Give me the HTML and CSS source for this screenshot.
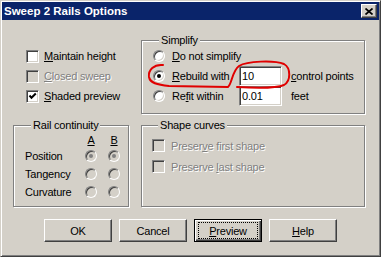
FILE: index.html
```html
<!DOCTYPE html>
<html lang="en">
<head>
  <meta charset="UTF-8" />
  <meta name="viewport" content="width=device-width, initial-scale=1.0" />
  <title>Sweep 2 Rails Options</title>
  <link rel="stylesheet" href="styles.css">
</head>
<body>
  <div class="window">
    <div class="titlebar">
      <span class="title">Sweep 2 Rails Options</span>
      <button class="close" aria-label="Close">
        <svg width="8" height="7" viewBox="0 0 8 7"><path d="M0.5 0.5 L7.5 6.5 M7.5 0.5 L0.5 6.5" stroke="#000" stroke-width="1.7" fill="none"/></svg>
      </button>
    </div>

    <div class="content">
      <div class="groups">
        <div class="options">
          <label class="check"><span class="box"></span><span><u>M</u>aintain height</span></label>
          <label class="check disabled"><span class="box"></span><span><u>C</u>losed sweep</span></label>
          <label class="check"><span class="box"><svg width="9" height="9" viewBox="0 0 9 9"><path d="M1.5 3.5 L3.5 5.8 L7.8 1.5" stroke="#000" stroke-width="2" fill="none"/></svg></span><span><u>S</u>haded preview</span></label>
        </div>

        <fieldset class="group simplify">
          <legend>Simplify</legend>
          <div class="simplify-grid">
            <label class="radio"><span class="dot"></span><span><u>D</u>o not simplify</span></label>
            <span></span><span></span>
            <label class="radio"><span class="dot on"></span><span><u>R</u>ebuild with</span></label>
            <input class="field" type="text" value="10">
            <span class="unit"><u>c</u>ontrol points</span>
            <label class="radio"><span class="dot"></span><span>Re<u>f</u>it within</span></label>
            <input class="field" type="text" value="0.01">
            <span class="unit">feet</span>
          </div>
        </fieldset>

        <fieldset class="group rail">
          <legend>Rail continuity</legend>
          <div class="rail-grid">
            <span></span><span class="col"><u>A</u></span><span class="col"><u>B</u></span>
            <span>Position</span><span class="dot off on"></span><span class="dot off on"></span>
            <span>Tangency</span><span class="dot off"></span><span class="dot off"></span>
            <span>Curvature</span><span class="dot off"></span><span class="dot off"></span>
          </div>
        </fieldset>

        <fieldset class="group shape">
          <legend>Shape curves</legend>
          <div class="shape-list">
            <label class="check disabled"><span class="box"></span><span>Preser<u>v</u>e first shape</span></label>
            <label class="check disabled"><span class="box"></span><span>Preserve <u>l</u>ast shape</span></label>
          </div>
        </fieldset>
      </div>

      <div class="buttons">
        <button class="btn"><span class="label">OK</span></button>
        <button class="btn"><span class="label">Cancel</span></button>
        <button class="btn default"><span class="label"><u>P</u>review</span></button>
        <button class="btn"><span class="label"><u>H</u>elp</span></button>
      </div>
    </div>

    <!-- hand-drawn red marker around the rebuild option -->
    <svg class="annotation" width="381" height="257" viewBox="0 0 381 257">
      <path d="M164 66 C155 65 149 71 150 78 C151 84 158 86 170 87 L229 88 C233 85 233 72 240 67 C248 62 275 61 285 65 C292 69 292 82 285 86 C278 89 255 89 238 88" stroke="#e00000" stroke-width="2" fill="none" stroke-linecap="round"/>
    </svg>
  </div>
</body>
</html>
```

FILE: styles.css
```css
body {
  margin: 0;
  font-family: 'Liberation Sans', Arial, sans-serif;
  font-size: 11px;
  letter-spacing: -0.2px;
  color: #000;
  background: #d4d0c8;
}
.window {
  position: relative;
  width: 381px;
  height: 257px;
  box-sizing: border-box;
  padding: 1px;
  background: #d4d0c8;
  border: 1px solid;
  border-color: #d4d0c8 #404040 #404040 #d4d0c8;
  box-shadow: inset 1px 1px 0 #fff, inset -1px -1px 0 #808080;
}
.titlebar {
  height: 18px;
  background: #0a246a;
  display: flex;
  align-items: center;
  justify-content: space-between;
  padding-left: 2px;
}
.title {
  color: #fff;
  font-weight: bold;
  font-size: 11.5px;
  letter-spacing: 0;
  line-height: 18px;
}
.close {
  width: 16px;
  height: 14px;
  margin-right: 2px;
  padding: 0;
  display: flex;
  align-items: center;
  justify-content: center;
  background: #d4d0c8;
  border: 1px solid;
  border-color: #fff #404040 #404040 #fff;
  box-shadow: inset -1px -1px 0 #808080;
}
.content {
  padding: 14px 0 0 11px;
}
.groups {
  display: grid;
  grid-template-columns: 116px 224px;
  column-gap: 12px;
  row-gap: 5px;
}
.options {
  padding: 12px 0 0 13px;
  display: flex;
  flex-direction: column;
}
.check {
  height: 20px;
  display: flex;
  align-items: center;
  gap: 5px;
  white-space: nowrap;
}
.box {
  width: 13px;
  height: 13px;
  box-sizing: border-box;
  flex: none;
  background: #fff;
  border: 1px solid;
  border-color: #808080 #fff #fff #808080;
  box-shadow: inset 1px 1px 0 #404040, inset -1px -1px 0 #d4d0c8;
  display: flex;
  align-items: center;
  justify-content: center;
}
.disabled {
  color: #808080;
  text-shadow: 1px 1px 0 #fff;
}
.disabled .box {
  background: #d4d0c8;
}
.group {
  margin: 0;
  padding: 0;
  min-width: 0;
  border: 1px solid #808080;
  box-shadow: 1px 1px 0 #fff, inset 1px 1px 0 #fff;
}
.group legend {
  margin-left: 6px;
  padding: 0 2px;
  line-height: 12px;
  background: #d4d0c8;
}
.simplify {
  padding: 0 0 7px 11px;
}
.simplify-grid {
  display: grid;
  grid-template-columns: 86px 43px auto;
  grid-auto-rows: 20px;
  align-items: center;
}
.radio {
  display: flex;
  align-items: center;
  gap: 7px;
  white-space: nowrap;
}
.dot {
  width: 12px;
  height: 12px;
  box-sizing: border-box;
  flex: none;
  border-radius: 50%;
  background: #fff;
  border: 1px solid;
  border-color: #808080 #fff #fff #808080;
  box-shadow: inset 1px 1px 0 #404040, inset -1px -1px 0 #d4d0c8;
  display: flex;
  align-items: center;
  justify-content: center;
}
.dot.on::after {
  content: "";
  width: 4px;
  height: 4px;
  border-radius: 50%;
  background: #000;
}
.dot.off {
  background: #d4d0c8;
}
.dot.off.on::after {
  background: #808080;
}
.field {
  width: 43px;
  height: 20px;
  box-sizing: border-box;
  margin: 0;
  padding: 0 2px;
  font: inherit;
  letter-spacing: inherit;
  background: #fff;
  border: 1px solid;
  border-color: #808080 #fff #fff #808080;
  box-shadow: inset 1px 1px 0 #404040, inset -1px -1px 0 #d4d0c8;
  outline: none;
}
.unit {
  margin-left: 9px;
  white-space: nowrap;
}
.rail {
  padding: 2px 0 5px 11px;
}
.rail-grid {
  display: grid;
  grid-template-columns: 49px 12px 12px;
  grid-template-rows: 14px repeat(3, 18px);
  column-gap: 11px;
  align-items: center;
  white-space: nowrap;
}
.col {
  text-align: center;
}
.shape {
  padding: 4px 0 0 10px;
}
.shape-list .check {
  height: 21px;
  gap: 6px;
}
.buttons {
  margin-top: 12px;
  margin-left: -11px;
  display: flex;
  justify-content: center;
  gap: 7px;
}
.btn {
  width: 68px;
  height: 23px;
  padding: 0;
  display: flex;
  font: inherit;
  letter-spacing: inherit;
  color: #000;
  background: #d4d0c8;
  border: 1px solid;
  border-color: #fff #404040 #404040 #fff;
  box-shadow: inset -1px -1px 0 #808080;
}
.btn .label {
  flex: 1;
  margin: 2px 3px;
  border: 1px solid transparent;
  display: flex;
  align-items: center;
  justify-content: center;
}
.btn.default {
  border-color: #000;
  box-shadow: inset 1px 1px 0 #fff, inset -1px -1px 0 #404040, inset -2px -2px 0 #808080;
}
.btn.default .label {
  border: 1px dotted #000;
}
.annotation {
  position: absolute;
  top: -2px;
  left: -2px;
  pointer-events: none;
}
```
